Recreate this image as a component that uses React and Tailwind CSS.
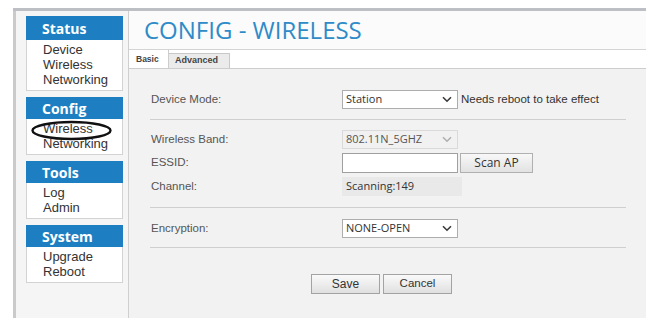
import React from 'react';

const menu = [
  { title: 'Status', items: ['Device', 'Wireless', 'Networking'], head: 'h-[24px]' },
  { title: 'Config', items: ['Wireless', 'Networking'], head: 'h-[22px]' },
  { title: 'Tools', items: ['Log', 'Admin'], head: 'h-[22px]' },
  { title: 'System', items: ['Upgrade', 'Reboot'], head: 'h-[22px]' },
];

function Chevron({ light }) {
  return (
    <svg width="10" height="7" viewBox="0 0 10 7" className="shrink-0">
      <path d="M1 1.2 L5 5.2 L9 1.2" fill="none" stroke={light ? '#b0b0b0' : '#3a3a3a'} strokeWidth="1.6" />
    </svg>
  );
}

function Select({ value, disabled }) {
  return (
    <div
      className={
        'w-[116px] h-[19px] flex items-center justify-between pl-[3px] pr-[5px] border text-[11px] font-["Open_Sans"] ' +
        (disabled ? 'bg-[#f1f1f1] border-[#dadada] text-[#555]' : 'bg-white border-[#adadad] text-[#333]')
      }
    >
      <span>{value}</span>
      <Chevron light={disabled} />
    </div>
  );
}

function Row({ label, children, className = '' }) {
  return (
    <div className={'flex items-center ' + className}>
      <div className="w-[191px] text-[11.5px] text-[#555]">{label}</div>
      {children}
    </div>
  );
}

const Sep = ({ className = '' }) => <div className={'ml-[-1px] w-[476px] h-px bg-[#cfcfcf] ' + className} />;

export default function App() {
  return (
    <div className="relative w-[656px] h-[335px] bg-white font-['Liberation_Sans',Arial,sans-serif] overflow-hidden">
      <div className="ml-[13px] mt-[8px] w-[633px] h-[310px] border-t-[3px] border-t-[#bcc0c4] flex">
        {/* sidebar */}
        <div className="w-[116px] shrink-0 border-l-[3px] border-l-[#cacaca] border-r border-r-[#cfcfcf] bg-[#f5f5f5] pl-[10px] pt-[5px]">
          {menu.map((m, i) => (
            <div key={m.title} className={'w-[97px] bg-white border border-[#d3d3d3] ' + (i ? 'mt-[6px]' : '')}>
              <div className={m.head + ' bg-[#1d7fc2] text-white font-bold text-[14px] font-["Open_Sans"] flex items-center pl-[16px] -mx-px -mt-px'}>
                {m.title}
              </div>
              <div className="pt-[2px] pb-[3px] pl-[16px] text-[13px] leading-[15px] text-[#333]">
                {m.items.map((t) => (
                  <div key={t}>{t}</div>
                ))}
              </div>
            </div>
          ))}
        </div>

        {/* main */}
        <div className="flex-1 flex flex-col">
          <div className="h-[38px] bg-[#fbfbfc] pl-[15px] pt-[7px]">
            <div className="text-[24px] leading-[24px] text-[#2e8bc8] font-['Open_Sans']">CONFIG - WIRELESS</div>
          </div>
          <div className="h-[20px] bg-white border-t border-t-[#d4d4d4] border-b border-b-[#cdcdcd] flex items-end">
            <div className="w-[40px] h-full border-r border-r-[#cdcdcd] flex items-center pl-[7px] text-[8.5px] font-bold text-[#444]">
              Basic
            </div>
            <div className="w-[61px] h-[15px] bg-[#ebebeb] border-t border-r border-[#c8c8c8] flex items-center pl-[6px] text-[9px] font-bold text-[#444]">
              Advanced
            </div>
          </div>

          <div className="flex-1 bg-[#f2f2f2] pl-[22px] pt-[21px]">
            <Row label="Device Mode:">
              <Select value="Station" />
              <span className="ml-[3px] text-[11.5px] text-[#333]">Needs reboot to take effect</span>
            </Row>
            <Sep className="mt-[10px]" />
            <Row label="Wireless Band:" className="mt-[10px]">
              <Select value="802.11N_5GHZ" disabled />
            </Row>
            <Row label="ESSID:" className="mt-[4px]">
              <div className="w-[116px] h-[20px] bg-white border border-[#a0a0a0]" />
              <div className="ml-[2px] w-[73px] h-[20px] border border-[#b0b0b0] bg-gradient-to-b from-[#f8f8f8] to-[#e2e2e2] flex items-center justify-center text-[12px] font-['Open_Sans'] text-[#333]">
                Scan AP
              </div>
            </Row>
            <Row label="Channel:" className="mt-[4px]">
              <div className="w-[120px] h-[19px] bg-[#e9e9e9] flex items-center pl-[4px] text-[11px] font-['Open_Sans'] text-[#333]">
                Scanning:149
              </div>
            </Row>
            <Sep className="mt-[11px]" />
            <Row label="Encryption:" className="mt-[11px]">
              <Select value="NONE-OPEN" />
            </Row>
            <Sep className="mt-[9px]" />
            <div className="mt-[26px] pl-[160px] flex gap-[3px]">
              <div className="w-[69px] h-[20px] border border-[#a3a3a3] bg-gradient-to-b from-[#fafafa] to-[#e0e0e0] flex items-center justify-center text-[12px] text-[#333]">
                Save
              </div>
              <div className="w-[69px] h-[20px] border border-[#a3a3a3] bg-gradient-to-b from-[#fafafa] to-[#e0e0e0] flex items-center justify-center text-[11.5px] text-[#333]">
                Cancel
              </div>
            </div>
          </div>
        </div>
      </div>

      {/* hand-drawn mark around Config > Wireless */}
      <svg className="absolute left-[30px] top-[120px]" width="84" height="22" viewBox="0 0 84 22">
        <ellipse cx="41.5" cy="10.5" rx="39" ry="8.5" fill="none" stroke="#111" strokeWidth="2.4" />
      </svg>
    </div>
  );
}
